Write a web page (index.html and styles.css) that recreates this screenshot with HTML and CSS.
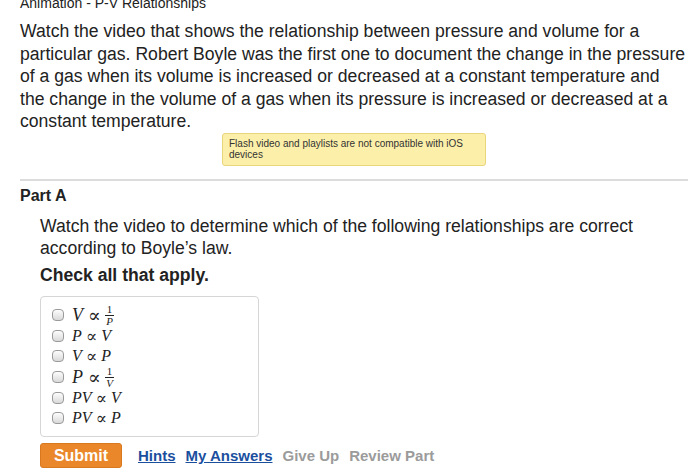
FILE: index.html
```html
<!DOCTYPE html>
<html>
<head>
<meta charset="utf-8">
<link rel="stylesheet" href="styles.css">
</head>
<body>
<div class="page">
  <div class="title">Animation - P-V Relationships</div>
  <p class="intro">Watch the video that shows the relationship between pressure and volume for a particular gas. Robert Boyle was the first one to document the change in the pressure of a gas when its volume is increased or decreased at a constant temperature and the change in the volume of a gas when its pressure is increased or decreased at a constant temperature.</p>
  <div class="notice">Flash video and playlists are not compatible with iOS devices</div>
  <hr class="sep">
  <div class="part-title">Part A</div>
  <div class="part">
    <p class="question">Watch the video to determine which of the following relationships are correct according to Boyle’s law.</p>
    <p class="instr">Check all that apply.</p>
    <div class="choices">
      <label class="row tall"><span class="cb"></span><span class="math big"><i>V</i><span class="prop">∝</span><span class="frac"><span class="num">1</span><span class="den"><i>P</i></span></span></span></label>
      <label class="row"><span class="cb"></span><span class="math"><i>P</i><span class="prop">∝</span><i>V</i></span></label>
      <label class="row"><span class="cb"></span><span class="math"><i>V</i><span class="prop">∝</span><i>P</i></span></label>
      <label class="row tall"><span class="cb"></span><span class="math big"><i>P</i><span class="prop">∝</span><span class="frac"><span class="num">1</span><span class="den"><i>V</i></span></span></span></label>
      <label class="row"><span class="cb"></span><span class="math"><i>PV</i><span class="prop">∝</span><i>V</i></span></label>
      <label class="row"><span class="cb"></span><span class="math"><i>PV</i><span class="prop">∝</span><i>P</i></span></label>
    </div>
    <div class="actions">
      <button class="submit">Submit</button>
      <a class="link" href="#">Hints</a>
      <a class="link" href="#">My Answers</a>
      <span class="muted">Give Up</span>
      <span class="muted">Review Part</span>
    </div>
  </div>
</div>
</body>
</html>
```
FILE: styles.css
```css
* { box-sizing: border-box; }
html, body { margin: 0; padding: 0; background: #fff; }
body {
  font-family: "Liberation Sans", Arial, sans-serif;
  color: #222;
}
.page {
  width: 688px;
  padding-left: 20px;
  overflow: hidden;
  height: 475px;
}
.title {
  font-size: 14px;
  line-height: 16px;
  margin-top: -5px;
  color: #222;
}
.intro {
  margin: 9px 0 0;
  font-size: 17.6px;
  line-height: 22.5px;
  color: #222;
}
.notice {
  width: 264px;
  margin: 0 auto;
  background: #fcefa9;
  border: 1px solid #e9d67c;
  border-radius: 3px;
  padding: 4px 6px;
  font-size: 10px;
  line-height: 11.5px;
  color: #333;
}
.sep {
  margin: 13px 0 0;
  width: 668px;
  border: 0;
  border-top: 2px solid #dcdcdc;
  height: 0;
}
.part-title {
  margin-top: 5px;
  font-size: 16px;
  font-weight: bold;
  line-height: 20px;
}
.part {
  padding-left: 20px;
}
.question {
  margin: 9px 0 0;
  font-size: 17.6px;
  line-height: 22.5px;
  width: 640px;
}
.instr {
  margin: 4px 0 0;
  font-size: 17.6px;
  font-weight: bold;
  line-height: 22.5px;
}
.choices {
  margin-top: 10px;
  width: 219px;
  height: 141px;
  border: 1px solid #d6d6d6;
  border-radius: 4px;
  padding: 7px 0 0 11px;
}
.row {
  display: flex;
  align-items: center;
  height: 20px;
  gap: 8px;
}
.row.tall { height: 22px; }
.cb {
  width: 12px;
  height: 12px;
  border: 1px solid #9a9a9a;
  border-radius: 4px;
  background: linear-gradient(#fdfdfd, #d9d9d9);
  flex: none;
}
.math {
  font-family: "Liberation Serif", "Times New Roman", serif;
  font-size: 16px;
  color: #222;
  display: inline-flex;
  align-items: center;
}
.math.big { font-size: 18px; }
.prop {
  font-family: "DejaVu Serif", serif;
  font-style: normal;
  font-size: 1.05em;
  margin: 0 4px;
}
.big .prop { margin: 0 4px 0 5px; }
.frac {
  display: inline-flex;
  flex-direction: column;
  align-items: center;
  font-size: 11px;
  line-height: 9px;
}
.frac .num {
  border-bottom: 1px solid #222;
  padding: 0 2px 1px;
}
.frac .den { padding-top: 1px; }
.actions {
  margin-top: 6px;
  display: flex;
  align-items: center;
  gap: 10px;
}
.submit {
  width: 82px;
  height: 25px;
  background: #e9872a;
  border: 1px solid #d8791f;
  border-radius: 3px;
  color: #fff;
  font-family: "Liberation Sans", Arial, sans-serif;
  font-weight: bold;
  font-size: 16px;
  padding: 0;
  margin-right: 6px;
}
.link {
  color: #1b4f9e;
  font-weight: bold;
  font-size: 15px;
  text-decoration: underline;
}
.muted {
  color: #9b9b9b;
  font-weight: bold;
  font-size: 15px;
}
```
